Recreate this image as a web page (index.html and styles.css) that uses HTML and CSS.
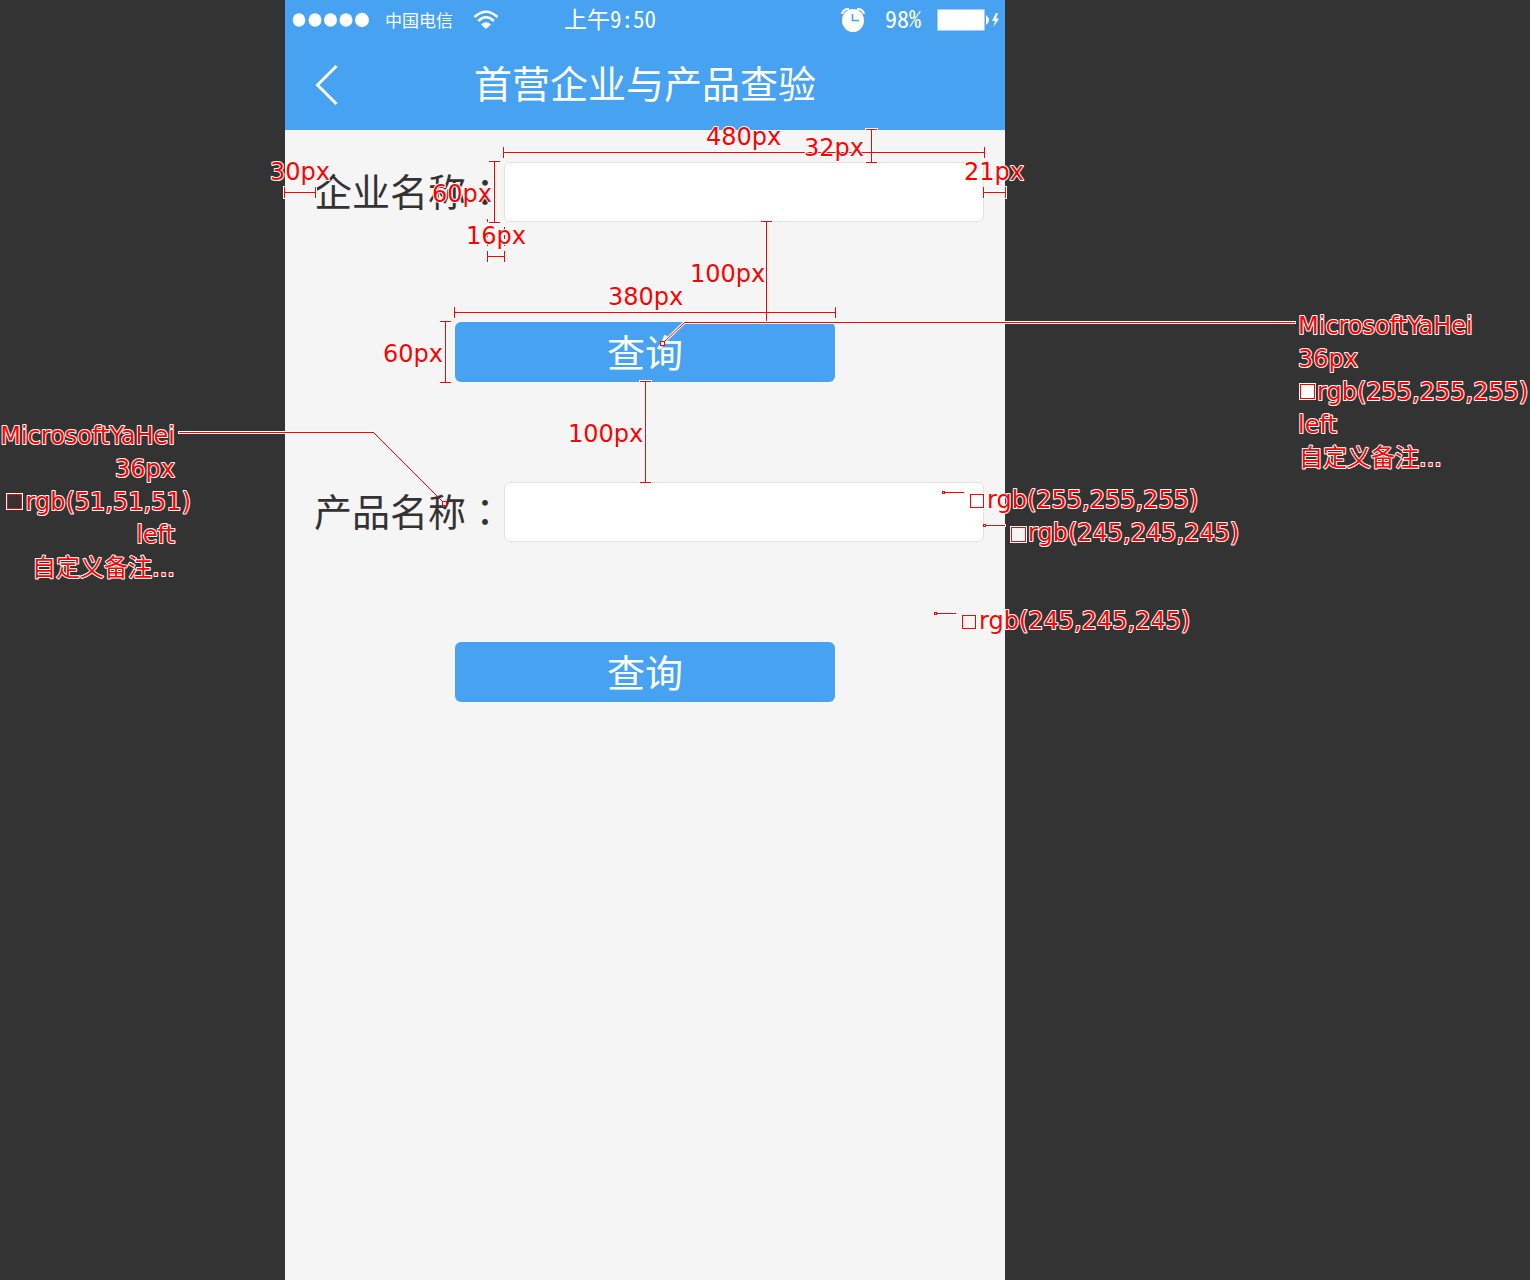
FILE: index.html
```html
<!DOCTYPE html>
<html lang="zh-CN">
<head>
<meta charset="utf-8">
<meta name="viewport" content="width=device-width, initial-scale=1">
<title>首营企业与产品查验</title>
<link rel="stylesheet" href="styles.css">
</head>
<body>
<div class="board">
  <div class="phone">
    <header class="top">
      <div class="status">
        <svg class="signal" width="76" height="16" viewBox="0 0 76 16" aria-hidden="true">
          <ellipse cx="6" cy="8" rx="6.3" ry="6.8"/><ellipse cx="22" cy="8" rx="6.5" ry="6.8"/><ellipse cx="37.5" cy="8" rx="6.5" ry="6.8"/><ellipse cx="53" cy="8" rx="6.5" ry="6.8"/><ellipse cx="69" cy="8" rx="7" ry="7.2"/>
        </svg>
        <span class="carrier">中国电信</span>
        <svg class="wifi" width="26" height="20" viewBox="0 0 26 20" aria-hidden="true">
          <path d="M1.5 7Q13-3.500 24.500 7M5.200 11Q13 3.500 20.800 11" fill="none" stroke="#fff" stroke-width="2.600"/>
          <path d="M8 14.500Q13 10 18 14.500L13 19Z"/>
        </svg>
        <time class="clock">上午9:50</time>
        <svg class="alarm" width="24" height="24" viewBox="0 0 24 24" aria-hidden="true">
          <ellipse cx="12" cy="12.500" rx="11" ry="11.500"/>
          <path d="M1 6Q2 1 8 1M23 6Q22 1 16 1" fill="none" stroke="#fff" stroke-width="2.200"/>
          <path d="M11.500 6V12.500H18" fill="none" stroke="#48a2f2" stroke-width="1.600"/>
        </svg>
        <span class="level">98%</span>
        <svg class="battery" width="62" height="22" viewBox="0 0 62 22" aria-hidden="true">
          <rect x="0.500" y="0.500" width="47" height="21"/>
          <path d="M49 6Q55 11 49 16ZM59 4L55 12H58L56.500 18L62 9.500H59L61 4Z"/>
        </svg>
      </div>
      <div class="bar">
        <a class="back" href="#" aria-label="返回">
          <svg width="24" height="42" viewBox="0 0 24 42" aria-hidden="true"><path d="M21.500 2L2.500 21L21.500 40" fill="none" stroke="#fff" stroke-width="3"/></svg>
        </a>
        <h1 class="title">首营企业与产品查验</h1>
      </div>
    </header>
    <main class="content">
      <form class="search">
        <div class="field">
          <label class="label" for="company">企业名称<span class="colon" lang="zh-TW">：</span></label>
          <input class="box" id="company" type="text">
        </div>
        <button class="query" type="button">查询</button>
      </form>
      <form class="search">
        <div class="field">
          <label class="label" for="product">产品名称<span class="colon" lang="zh-TW">：</span></label>
          <input class="box" id="product" type="text">
        </div>
        <button class="query" type="button">查询</button>
      </form>
    </main>

    <svg class="notes" width="720" height="1280">
      <defs>
        <path id="rules" d="M503 152H984M503 147V157M984 147V157
          M494 161V222M489 161H499M489 222H499
          M284 192H315M284 187V197M315 187V197
          M487 256H504M487 251V261M504 251V261
          M487 219V221M487 234V236M487 243V245M504 227V229M504 235V238M504 243V245
          M871 129V162M866 129H876M866 162H876
          M983 192H1005M983 187V197M1005 187V197
          M766 221V320M761 221H771
          M454 312H835M454 307V317M835 307V317
          M445 321V382M440 321H450M440 382H450
          M645 381V482M640 381H650M640 482H650
          M664 341L684 322H1294
          M179 432H373
          M945 492H963M986 525H1004M937 613H955"/>
      </defs>
      <g transform="translate(-284.5 .5)">
        <use class="halo" href="#rules"/>
        <use class="rule" href="#rules"/>
        <path class="rule" d="M373 432L444 503"/>
        <g class="pin">
          <rect x="660" y="341" width="4" height="4"/>
          <rect x="442" y="501" width="4" height="4"/>
          <rect x="942" y="491" width="2" height="2"/>
          <rect x="983" y="524" width="2" height="2"/>
          <rect x="934" y="612" width="2" height="2"/>
        </g>
        <g class="swatch-halo">
          <rect x="7" y="494" width="14" height="14"/>
          <rect x="1300" y="384" width="14" height="14"/>
          <rect x="970" y="494" width="13" height="13"/>
          <rect x="1011" y="527" width="14" height="14"/>
          <rect x="962" y="615" width="13" height="13"/>
        </g>
        <g class="swatch">
          <rect class="ink" x="7" y="494" width="14" height="14"/>
          <rect class="white" x="1300" y="384" width="14" height="14"/>
          <rect class="white" x="970" y="494" width="13" height="13"/>
          <rect class="gray" x="1011" y="527" width="14" height="14"/>
          <rect class="gray" x="962" y="615" width="13" height="13"/>
        </g>
      </g>
      <g class="note" transform="translate(-285 0)">
        <text x="706" y="145">480px</text>
        <text x="804" y="156">32px</text>
        <text x="270" y="180">30px</text>
        <text x="964" y="180">21px</text>
        <text x="432" y="202">60px</text>
        <text x="466" y="244">16px</text>
        <text x="690" y="282">100px</text>
        <text x="608" y="305">380px</text>
        <text x="383" y="362">60px</text>
        <text x="568" y="442">100px</text>
        <g class="end">
          <text x="175" y="444">MicrosoftYaHei</text>
          <text x="175" y="477">36px</text>
          <text x="191" y="510">rgb(51,51,51)</text>
          <text x="175" y="543">left</text>
          <text x="175" y="576">自定义备注...</text>
        </g>
        <text x="1298" y="334">MicrosoftYaHei</text>
        <text x="1298" y="367">36px</text>
        <text x="1317" y="400">rgb(255,255,255)</text>
        <text x="1298" y="433">left</text>
        <text x="1299" y="466">自定义备注...</text>
        <text x="987" y="508">rgb(255,255,255)</text>
        <text x="1028" y="541">rgb(245,245,245)</text>
        <text x="979" y="629">rgb(245,245,245)</text>
      </g>
    </svg>
  </div>
</div>
</body>
</html>
```
FILE: styles.css
```css
* { box-sizing: border-box; }

body {
  margin: 0;
  background: #333;
  color: #333;
  font-family: "Noto Sans CJK SC", "Noto Sans", sans-serif;
}

.board {
  display: grid;
  grid-template-columns: 19fr minmax(0, 720px) 35fr;
  min-height: 100vh;
  overflow: hidden;
}

.phone {
  grid-column: 2;
  position: relative;
  background: #f5f5f5;
}

.top {
  background: #48a2f2;
  color: #fff;
  fill: #fff;
}

.status {
  display: flex;
  align-items: center;
  height: 40px;
  padding: 0 6px 0 8px;
  white-space: nowrap;
}

.status svg { flex: none; }
.signal { overflow: visible; }
.carrier { margin-left: 16px; font-size: 17px; line-height: 40px; }
.wifi { margin-left: 20px; }
.clock,
.level {
  padding-bottom: 4px;
  font-feature-settings: "hwid";
  line-height: 36px;
}
.clock { margin-left: 65px; font-size: 23px; }
.alarm { margin-left: auto; }
.level { margin: 0 16px 0 20px; font-size: 24px; }

.bar {
  display: grid;
  grid-template-columns: 60px 1fr 60px;
  align-items: center;
  height: 90px;
}

.back { display: flex; padding-left: 30px; }

.title {
  margin: 0;
  padding-bottom: 6px;
  font-size: 38px;
  font-weight: 400;
  line-height: 60px;
  text-align: center;
  white-space: nowrap;
}

.content {
  display: flex;
  flex-direction: column;
  gap: 100px;
  padding: 32px 0;
}

.search {
  display: flex;
  flex-direction: column;
  align-items: center;
  gap: 100px;
}

.field {
  display: flex;
  justify-content: space-between;
  width: 100%;
  height: 60px;
  padding: 0 21px 0 29px;
}

.label {
  font-size: 38px;
  line-height: 56px;
  white-space: nowrap;
}

.colon { font-family: "Noto Sans CJK TC", sans-serif; }

.box {
  flex: 0 1 480px;
  min-width: 0;
  height: 60px;
  padding: 0 16px;
  border: 1px solid #e2e2e2;
  border-radius: 6px;
  background: #fff;
  color: #333;
  font: inherit;
  font-size: 36px;
}

.query {
  width: 380px;
  max-width: 100%;
  height: 60px;
  padding: 0 0 2px;
  border: 0;
  border-radius: 6px;
  background: #48a2f2;
  color: #fff;
  font-family: inherit;
  font-size: 38px;
  line-height: 56px;
}

/* Red-line layer drawn over the screen */
.notes {
  position: absolute;
  top: 0;
  left: 0;
  overflow: visible;
  pointer-events: none;
}

.halo { fill: none; stroke: #fff; stroke-width: 3px; stroke-linecap: square; }
.rule { fill: none; stroke: #f00; stroke-width: 1px; stroke-linecap: square; }
.pin rect { fill: #fff; stroke: #f00; stroke-width: 1px; }
.swatch-halo rect { fill: #fff; stroke: #fff; stroke-width: 3px; }
.swatch rect { stroke: #f00; stroke-width: 1px; }
.ink { fill: #333; }
.white { fill: #fff; }
.gray { fill: #f5f5f5; }

.note {
  fill: #f00;
  stroke: #fff;
  stroke-width: 2px;
  stroke-linejoin: round;
  paint-order: stroke;
  font-family: "DejaVu Sans", "Noto Sans CJK SC", sans-serif;
  font-size: 24px;
}

.end { text-anchor: end; }
```
